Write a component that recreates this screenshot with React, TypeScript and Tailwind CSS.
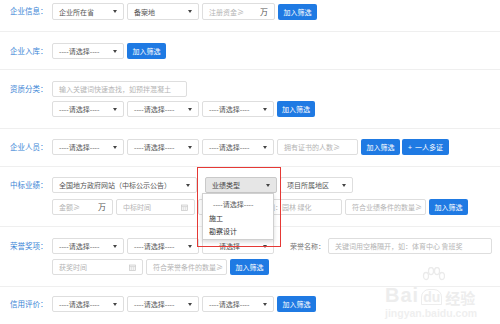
import React from "react";

const Arrow = () => (
  <svg width="4" height="3" viewBox="0 0 4 3" className="shrink-0">
    <path d="M0 0 L4 0 L2 3 Z" fill="#444" />
  </svg>
);

const Cal = () => (
  <svg width="7" height="7" viewBox="0 0 7 7" className="shrink-0">
    <rect x="0.5" y="1" width="6" height="5.5" fill="#f4f4f4" stroke="#c8c8c8" strokeWidth="0.7" />
    <line x1="0.5" y1="2.6" x2="6.5" y2="2.6" stroke="#c8c8c8" strokeWidth="0.6" />
    <line x1="2.5" y1="2.6" x2="2.5" y2="6.5" stroke="#d6d6d6" strokeWidth="0.5" />
    <line x1="4.5" y1="2.6" x2="4.5" y2="6.5" stroke="#d6d6d6" strokeWidth="0.5" />
  </svg>
);

function Sel({ cls, children, active }: { cls: string; children: React.ReactNode; active?: boolean }) {
  return (
    <div
      className={`${cls} flex items-center justify-between rounded-[2px] border px-[6px] text-[7px] leading-[10px] ${
        active ? "border-[#c9c9c9] bg-[#e6e6e6] text-[#444]" : "border-[#dedede] bg-white text-[#555]"
      }`}
    >
      <span className="whitespace-nowrap">{children}</span>
      <Arrow />
    </div>
  );
}

function Inp({ cls, ph, suffix, cal }: { cls: string; ph: string; suffix?: string; cal?: boolean }) {
  return (
    <div className={`${cls} flex items-center justify-between gap-[2px] rounded-[2px] border border-[#dedede] bg-white px-[6px] text-[7px] leading-[10px]`}>
      <span className="whitespace-nowrap text-[#b4b4b4]">{ph}</span>
      {suffix && <span className="shrink-0 text-[8px] leading-[10px] text-[#555]">{suffix}</span>}
      {cal && <Cal />}
    </div>
  );
}

function Btn({ cls, children }: { cls: string; children: React.ReactNode }) {
  return (
    <div className={`${cls} flex items-center justify-center rounded-[2px] bg-[#1f7ae3] text-[7px] leading-[10px] text-white whitespace-nowrap`}>
      {children}
    </div>
  );
}

function Label({ children }: { children: React.ReactNode }) {
  return (
    <div className="flex h-[16px] w-[52px] shrink-0 items-center pl-[10px] text-[7.5px] leading-[10px] text-[#3b85d6] whitespace-nowrap">
      {children}
    </div>
  );
}

const PICK = "----请选择----";

export default function App() {
  return (
    <div className="relative h-[324px] w-[500px] overflow-hidden bg-white font-['Noto_Sans_CJK_SC','Noto_Sans',sans-serif] leading-none">
      {/* 企业信息 */}
      <div className="flex border-b border-[#efefef] pb-[11px] pt-[3px]">
        <Label>企业信息：</Label>
        <div className="flex h-[17px] gap-[3px]">
          <Sel cls="w-[72px] h-[17px]">企业所在省</Sel>
          <Sel cls="w-[72px] h-[17px]">备案地</Sel>
          <Inp cls="w-[73px] h-[17px]" ph="注册资金≥" suffix="万" />
          <Btn cls="w-[39px] h-[16px] mt-[1px]">加入筛选</Btn>
        </div>
      </div>

      {/* 企业入库 */}
      <div className="flex border-b border-[#efefef] pb-[10px] pt-[11px]">
        <Label>企业入库：</Label>
        <div className="flex gap-[3px]">
          <Sel cls="w-[72px] h-[16px]">{PICK}</Sel>
          <Btn cls="w-[39px] h-[16px]">加入筛选</Btn>
        </div>
      </div>

      {/* 资质分类 */}
      <div className="flex border-b border-[#efefef] pb-[11px] pt-[11px]">
        <Label>资质分类：</Label>
        <div className="flex flex-col gap-[4px]">
          <Inp cls="w-[135px] h-[16px]" ph="输入关键词快速查找，如预拌混凝土" />
          <div className="flex gap-[3px]">
            <Sel cls="w-[72px] h-[16px]">{PICK}</Sel>
            <Sel cls="w-[72px] h-[16px]">{PICK}</Sel>
            <Sel cls="w-[72px] h-[16px]">{PICK}</Sel>
            <Btn cls="w-[38px] h-[16px]">加入筛选</Btn>
          </div>
        </div>
      </div>

      {/* 企业人员 */}
      <div className="flex border-b border-[#efefef] pb-[11px] pt-[10px]">
        <Label>企业人员：</Label>
        <div className="flex gap-[3px]">
          <Sel cls="w-[72px] h-[16px]">{PICK}</Sel>
          <Sel cls="w-[72px] h-[16px]">{PICK}</Sel>
          <Sel cls="w-[72px] h-[16px]">{PICK}</Sel>
          <Inp cls="w-[81px] h-[16px]" ph="拥有证书的人数≥" />
          <Btn cls="w-[39px] h-[16px]">加入筛选</Btn>
          <Btn cls="w-[47px] h-[16px] ml-[-1px]">+&nbsp;&nbsp;一人多证</Btn>
        </div>
      </div>

      {/* 中标业绩 */}
      <div className="flex border-b border-[#efefef] pb-[11px] pt-[10px]">
        <Label>中标业绩：</Label>
        <div className="flex flex-col gap-[6px]">
          <div className="flex gap-[3px]">
            <Sel cls="w-[145px] h-[16px]">全国地方政府网站（中标公示公告）</Sel>
            <div className="w-[2px]" />
            <Sel cls="w-[72px] h-[16px]" active>
              业绩类型
            </Sel>
            <Sel cls="w-[73px] h-[16px]">项目所属地区</Sel>
          </div>
          <div className="flex gap-[3px]">
            <Inp cls="w-[61px] h-[16px]" ph="金额≥" suffix="万" />
            <Inp cls="w-[79px] h-[16px]" ph="中标时间" cal />
            <Inp cls="w-[144px] h-[16px]" ph="关键词用空格隔开，如：园林 绿化" />
            <Inp cls="w-[81px] h-[16px]" ph="符合业绩条件的数量≥" />
            <Btn cls="w-[39px] h-[16px]">加入筛选</Btn>
          </div>
        </div>
      </div>

      {/* 荣誉奖项 */}
      <div className="flex border-b border-[#efefef] pb-[11px] pt-[11px]">
        <Label>荣誉奖项：</Label>
        <div className="flex flex-col gap-[5px]">
          <div className="flex items-center gap-[3px]">
            <Sel cls="w-[72px] h-[16px]">{PICK}</Sel>
            <Sel cls="w-[72px] h-[16px]">{PICK}</Sel>
            <Sel cls="w-[72px] h-[16px]">
              <span className="pl-[10px]">请选择</span>
            </Sel>
            <span className="ml-[13px] w-[35px] text-[7px] leading-[10px] text-[#777] whitespace-nowrap">荣誉名称：</span>
            <Inp cls="w-[164px] h-[16px]" ph="关键词用空格隔开，如：体育中心 鲁班奖" />
          </div>
          <div className="flex gap-[3px]">
            <Inp cls="w-[91px] h-[16px]" ph="获奖时间" cal />
            <Inp cls="w-[81px] h-[16px]" ph="符合荣誉条件的数量≥" />
            <Btn cls="w-[39px] h-[16px]">加入筛选</Btn>
          </div>
        </div>
      </div>

      {/* 信用评价 */}
      <div className="flex pt-[9px]">
        <Label>信用评价：</Label>
        <div className="flex gap-[3px]">
          <Sel cls="w-[72px] h-[16px]">{PICK}</Sel>
          <Sel cls="w-[72px] h-[16px]">{PICK}</Sel>
          <Sel cls="w-[72px] h-[16px]">{PICK}</Sel>
          <Btn cls="w-[39px] h-[16px]">加入筛选</Btn>
        </div>
      </div>

      {/* open dropdown */}
      <div className="absolute left-[202px] top-[193px] flex h-[47px] w-[72px] flex-col border border-[#d0d0d0] bg-white text-[7px] leading-[10px] text-[#333] shadow-[0_2px_4px_rgba(0,0,0,0.15)]">
        <div className="mt-[5px] pl-[10px] text-[#555]">{PICK}</div>
        <div className="mt-[4px] pl-[6px]">施工</div>
        <div className="mt-[3px] pl-[6px]">勘察设计</div>
      </div>

      {/* red highlight */}
      <div className="absolute left-[197px] top-[167px] h-[80px] w-[84px] border-[1.5px] border-[#e53935]" />

      {/* watermark */}
      <div className="pointer-events-none absolute left-[385px] top-[267px] flex flex-col text-[#ededed]">
        <svg width="24" height="18" viewBox="0 0 24 18" className="ml-[36px]">
          <g fill="none" stroke="#ebebeb" strokeWidth="1.3">
            <ellipse cx="5" cy="9" rx="2.5" ry="3.5" />
            <ellipse cx="10" cy="4" rx="2.5" ry="3.5" />
            <ellipse cx="16" cy="4" rx="2.5" ry="3.5" />
            <ellipse cx="21" cy="9" rx="2.5" ry="3.5" />
          </g>
        </svg>
        <div className="flex items-end font-['Liberation_Sans',sans-serif] font-bold leading-none">
          <span className="text-[20px] tracking-[1px]">Bai</span>
          <span className="ml-[2px] rounded-t-[8px] border-[1.5px] border-[#ededed] px-[1px] text-[14px]">du</span>
          <span className="ml-[3px] font-['Noto_Sans_CJK_SC',sans-serif] text-[15px]">经验</span>
        </div>
        <div className="mt-[3px] font-['Liberation_Sans',sans-serif] text-[10.5px] font-bold text-[#efefef]">jingyan.baidu.com</div>
      </div>
    </div>
  );
}
